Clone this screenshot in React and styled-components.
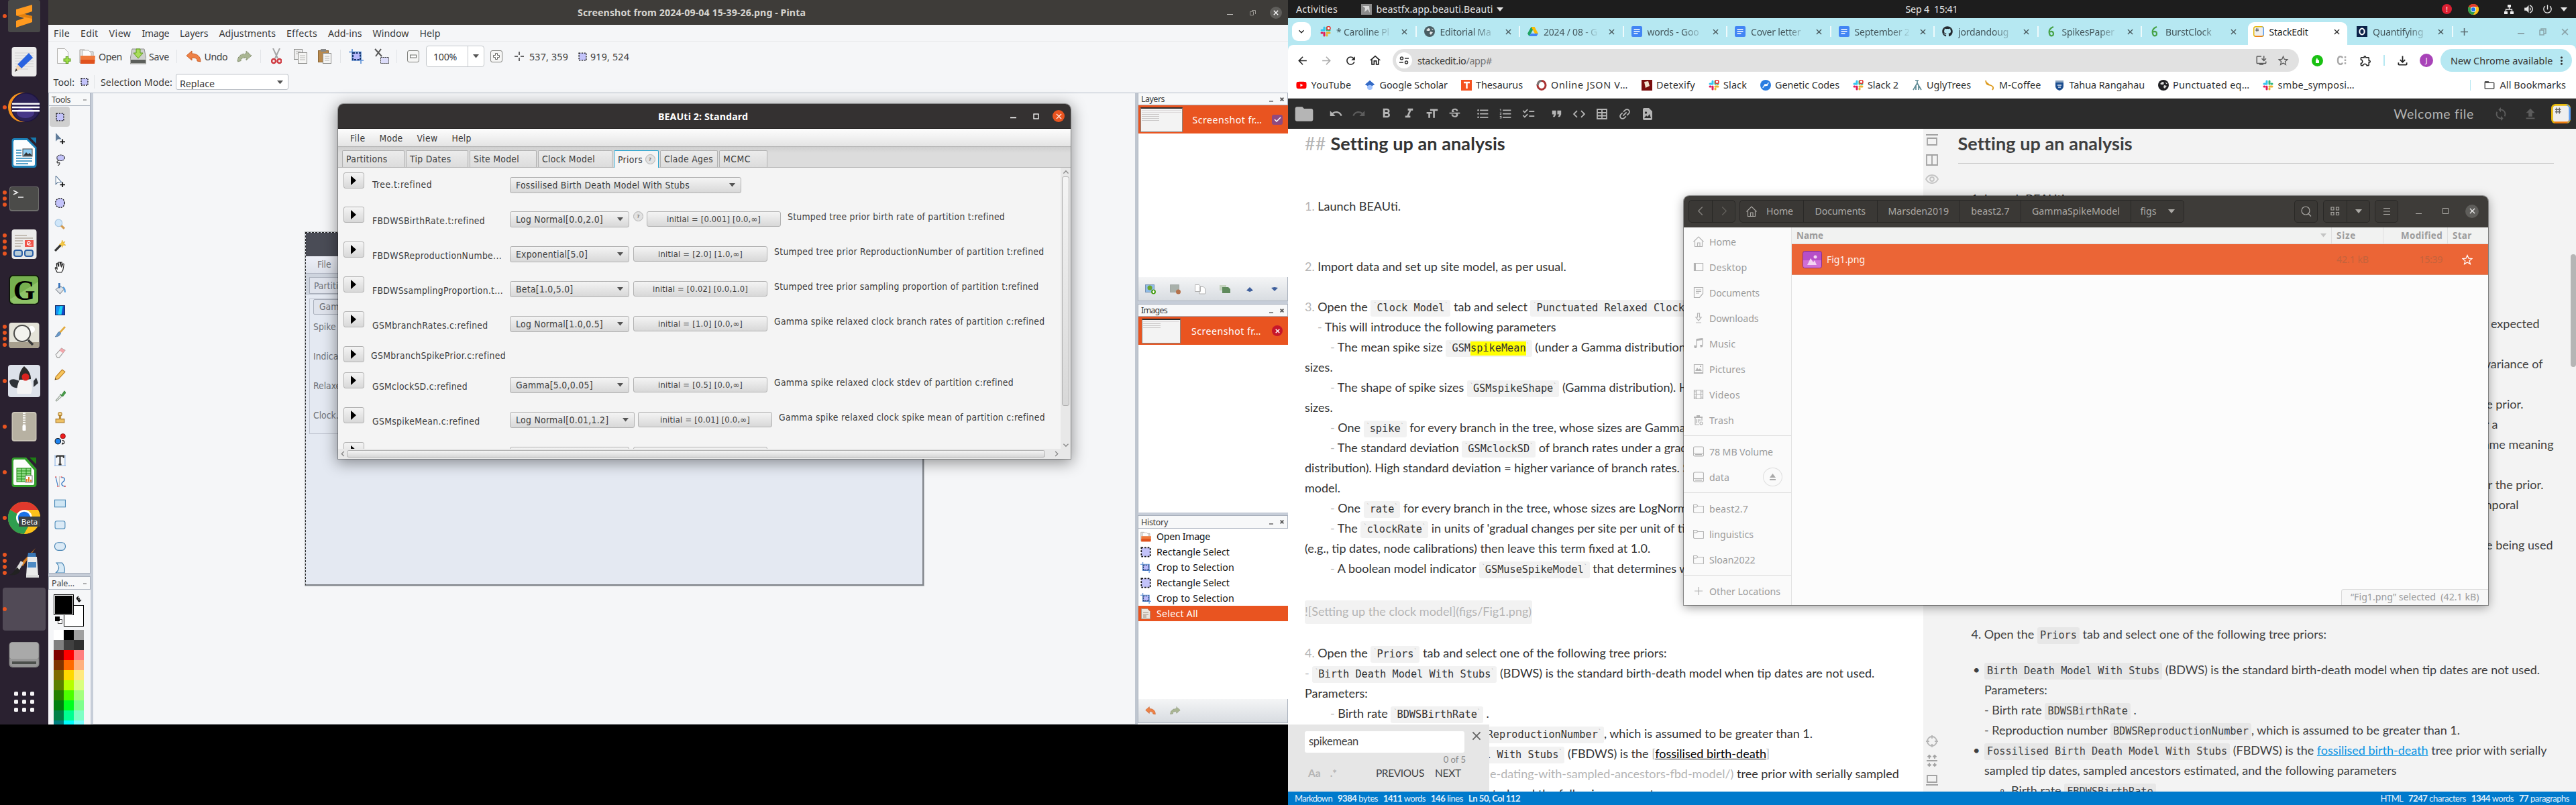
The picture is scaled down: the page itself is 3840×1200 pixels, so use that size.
import React, { useLayoutEffect, useRef } from "react";
import styled, { createGlobalStyle, css } from "styled-components";
import {
  MdUndo, MdRedo, MdFormatBold, MdFormatItalic, MdFormatSize, MdStrikethroughS,
  MdFormatListBulleted, MdFormatListNumbered, MdChecklist, MdFormatQuote, MdCode,
  MdLink, MdFolder, MdSync, MdFileUpload, MdArrowBack, MdArrowForward,
  MdRefresh, MdOutlineHome, MdStarBorder, MdOutlineExtension, MdFolderOpen,
  MdOutlineFileDownload, MdExpandMore, MdOutlineInstallDesktop,
  MdVolumeUp, MdPowerSettingsNew, MdMoreVert,
} from "react-icons/md";
import { FaGithub, FaYoutube } from "react-icons/fa";

const ui = `"Noto Sans", "Open Sans", sans-serif`;
const fx = `"DejaVu Sans Condensed", "DejaVu Sans", sans-serif`;
const prose = `Lato, "Open Sans", sans-serif`;
const mono = `"DejaVu Sans Mono", "Liberation Mono", monospace`;

const Global = createGlobalStyle`
  * { box-sizing: border-box; }
  body { margin: 0; background: #000; font-family: ${ui}; }
  svg { display: block; flex: none; }
`;

/* ---------- shared pieces ---------- */

const FitSpan = styled.span`
  display: inline-block;
  flex: none;
  white-space: pre;
`;

/* A one-line label that is tracked in or out until it fills the given width. */
function Fit({ w, children, className }) {
  const ref = useRef(null);
  useLayoutEffect(() => {
    const el = ref.current;
    el.style.letterSpacing = "0px";
    const natural = el.getBoundingClientRect().width;
    el.style.letterSpacing = `${(w - natural) / el.textContent.length}px`;
  }, [w, children]);
  return <FitSpan ref={ref} className={className}>{children}</FitSpan>;
}

const Desktop = styled.div`
  display: flex;
  width: 3840px;
  height: 1200px;
  background: #000;
  overflow: hidden;
`;
const LeftScreen = styled.div`
  position: relative;
  display: flex;
  width: 1920px;
  height: 1080px;
  flex: none;
  overflow: hidden;
`;
const RightScreen = styled.div`
  position: relative;
  display: flex;
  flex-direction: column;
  width: 1920px;
  height: 1200px;
  flex: none;
  overflow: hidden;
  background: #fff;
`;

/* ---------- dock ---------- */

const Dock = styled.nav`
  width: 72px;
  height: 1080px;
  flex: none;
  background: #2a2130;
  display: flex;
  flex-direction: column;
  overflow: hidden;
`;
const DockItem = styled.div`
  flex: none;
  height: 68px;
  display: flex;
  align-items: center;
  margin-top: ${(p) => (p.$first ? "-10px" : p.$last ? "2px" : 0)};
`;
const DockDots = styled.div`
  width: 12px;
  display: flex;
  flex-direction: column;
  gap: 3px;
  padding-left: 4px;
`;
const DockDot = styled.i`
  width: 6px;
  height: 6px;
  border-radius: 50%;
  background: #e95420;
`;
const DockBlank = styled.div`
  width: 64px;
  height: 64px;
  margin-left: -8px;
  border-radius: 4px;
  background: #514a56;
  display: flex;
  align-items: center;
`;
const AppGrid = styled.div`
  display: grid;
  grid-template-columns: repeat(3, 6px);
  gap: 6px;
  margin-left: 9px;
  i { width: 6px; height: 6px; border-radius: 1.5px; background: #f5f3f5; }
`;

const D = ({ children }) => <svg width="48" height="48" viewBox="0 0 48 48">{children}</svg>;

const ChromeLogo = ({ s = 48 }) => (
  <svg width={s} height={s} viewBox="0 0 48 48">
    <circle cx="24" cy="24" r="24" fill="#fbbc05" />
    <path d="M24 24 L3.2 12 A24 24 0 0 1 44.8 12 Z" fill="#e0392d" />
    <path d="M24 24 L3.2 12 A24 24 0 0 0 24 48 L34 30 Z" fill="#2f9e4f" />
    <path d="M24 12 H44.8 A24 24 0 0 1 24 48 L34.4 30Z" fill="#fcc21b" />
    <circle cx="24" cy="24" r="12" fill="#fff" />
    <circle cx="24" cy="24" r="9.3" fill="#1a73e8" />
  </svg>
);

const dockIcons = [
  { dots: 1, icon: <D><rect width="48" height="48" rx="3" fill="#474747" /><path d="M12 14L36 7v10l-12 4 12 3v9l-24 8V31l12-4-12-4z" fill="#ff9a1f" /><path d="M12 23l12-2 12 3v4z" fill="#e27f0d" /></D> },
  { dots: 0, icon: <D><rect x="5.5" y="2" width="37" height="44" rx="4" fill="#ecebeb" /><path d="M10 11h28M10 15h28M10 19h28M10 23h28M10 27h28M10 31h28M10 35h20" stroke="#cfcfcf" strokeWidth="1" /><path d="M14 28L31 11l6 7-17 16z" fill="#2a63e0" /><path d="M14 28l6 6-10 5z" fill="#f3d3b0" /><path d="M12 34l2 3-4 2z" fill="#333" /></D> },
  { dots: 1, icon: <D><circle cx="22" cy="24" r="22" fill="#f7941e" /><circle cx="26.5" cy="24" r="22" fill="#1d1440" /><circle cx="26.5" cy="24" r="20.5" fill="#2c2255" /><ellipse cx="26" cy="32" rx="13" ry="8" fill="#473788" /><path d="M6 18.7h41M6 24h41M6 29.3h41" stroke="#fff" strokeWidth="2.6" /></D> },
  { dots: 0, icon: <D><path d="M9 2h20l13.500 13.500V42a4 4 0 0 1-4 4H9.500a4 4 0 0 1-4-4V6a4 4 0 0 1 4-4z" fill="#1d81b8" /><path d="M33 1h9v9z" fill="#1579ae" /><path d="M9 5h19l12 12v24a2 2 0 0 1-2 2H10a2 2 0 0 1-2-2V7z" fill="#fcfdfe" /><path d="M12 20h8M12 24h8M12 28h8M12 32h24M12 36h24M12 40h18" stroke="#1d81b8" strokeWidth="1.600" /><rect x="22" y="18" width="14" height="11" fill="#8dcbf0" stroke="#444" /><path d="M23 28l4-5 3 3 2-2 4 4z" fill="#333" /></D> },
  { dots: 3, icon: <D><rect x="2" y="6" width="44" height="37" rx="4" fill="#6e6e6c" /><rect x="3" y="7" width="42" height="34" rx="3" fill="#4b4b49" /><path d="M8 12l6 3-6 3M15 22h8" stroke="#eee" strokeWidth="1.700" fill="none" /></D> },
  { dots: 4, icon: <D><rect x="5.500" y="2" width="37" height="44" rx="4" fill="#ecebea" /><path d="M10 11h18M10 15h27M10 19h12M10 23h12M10 27h9" stroke="#b5ada1" strokeWidth="1.500" /><rect x="25" y="18" width="13" height="10" fill="#f0544a" /><path d="M28 24c6 0 6-4 3-4s-3 7 4 5" stroke="#fff" fill="none" strokeWidth="1.300" /><rect x="9" y="33" width="12" height="9" rx="3" fill="#b9ccd8" stroke="#2c5fa5" strokeWidth="2" /><rect x="25" y="33" width="12" height="9" rx="3" fill="#b9ccd8" stroke="#2c5fa5" strokeWidth="2" /></D> },
  { dots: 0, icon: <D><rect x="1.500" y="2" width="45" height="44" rx="6" fill="#0b1506" /><rect x="3" y="3.500" width="42" height="41" rx="5" fill="#76b04f" /><path d="M3 38L45 12v28a5 5 0 0 1-5 5H8z" fill="#a5d57f" opacity=".5" /><text x="24" y="39" textAnchor="middle" fontFamily="Liberation Serif" fontWeight="bold" fontSize="42" fill="#000">G</text></D> },
  { dots: 4, icon: <D><rect x="1.500" y="5" width="45" height="38" rx="4" fill="#e4e3d8" /><path d="M1.500 34h45v5a4 4 0 0 1-4 4h-37a4 4 0 0 1-4-4z" fill="#a79f8d" /><circle cx="35" cy="15" r="5" fill="#fff" /><circle cx="21" cy="21" r="12" fill="#f3f3ee" stroke="#4a4a48" strokeWidth="2" /><path d="M30 31l7 7" stroke="#3a3a3a" strokeWidth="3.500" /></D> },
  { dots: 1, icon: <D><rect width="48" height="48" rx="4" fill="#dde2ea" /><path d="M24 2c-6 5-8 14-8 22l18-3c0-8-4-14-10-19z" fill="#2b2b2b" /><path d="M2 24c4-5 10-2 15 0l-2 10c-6 1-12-2-13-10zM38 24l4-5 3 8-7 6z" fill="#2f3338" /><path d="M17 22c-3 8-5 16-3 21h20c3-6 2-14-1-21z" fill="#f4f4f4" /><circle cx="26" cy="18" r="5.500" fill="#d8231f" /></D> },
  { dots: 1, icon: <D><rect x="5.500" y="2" width="37" height="44" rx="4" fill="#c9c4b6" /><rect x="7" y="4" width="34" height="40" rx="3" fill="#b7b1a2" /><path d="M24 3v20" stroke="#f6f6f2" strokeWidth="4" strokeDasharray="2 1.500" /><rect x="21.500" y="22" width="5" height="8" rx="1" fill="#fff" /></D> },
  { dots: 1, icon: <D><path d="M9 2h18l15.500 17V42a4 4 0 0 1-4 4H9.500a4 4 0 0 1-4-4V6a4 4 0 0 1 4-4z" fill="#33a02c" /><path d="M32 2h10v10z" fill="#1d7d14" /><path d="M9 5h16l14 16v20a2 2 0 0 1-2 2H10a2 2 0 0 1-2-2V7z" fill="#fbfdfb" /><rect x="13" y="18" width="21" height="20" fill="#8fdc86" stroke="#1d8a12" /><path d="M13 22h21M13 26h21M13 30h21M13 34h21M20 18v20M27 18v20" stroke="#1d8a12" /><rect x="26" y="29" width="10" height="10" fill="#fff" stroke="#777" /><path d="M28 38v-4M31 38v-7M34 38v-3" stroke="#e67e22" strokeWidth="2" /></D> },
  { dots: 1, icon: <D><ChromeLogo /><rect x="16" y="22" width="32" height="15" fill="#3c4043" /><text x="32" y="34" textAnchor="middle" fontFamily="Noto Sans" fontSize="11.500" fill="#fff">Beta</text></D> },
  { dots: 4, icon: <D><path d="M41 1L22 28l-4-3z" fill="#d67a1e" /><path d="M23 23l-7 12-5-2 8-13z" fill="#d9d9d9" /><path d="M14 30c-4 2-5 8-12 11 6 1 13 0 16-6z" fill="#222" /><path d="M30 8h11l1 6H29z" fill="#3a77b5" /><path d="M29 14h14l2 28H27z" fill="#eaeaea" /><path d="M30 22h12v8H29z" fill="#4d8ac4" /><path d="M27 41h19v4H27z" fill="#dcdcdc" /></D> },
];

const Drive = () => (
  <D><rect x="1.500" y="5" width="45" height="38" rx="5" fill="#7d7d7d" /><rect x="2.500" y="5.500" width="43" height="25" rx="4" fill="#a9a9a9" /><path d="M2.500 30h43v7a5 5 0 0 1-5 5h-33a5 5 0 0 1-5-5z" fill="#969696" /><rect x="6" y="34" width="36" height="4" fill="#4b4f4b" /></D>
);

function DockBar() {
  return (
    <Dock>
      {dockIcons.map((d, i) => (
        <DockItem key={i} $first={i === 0}>
          <DockDots>{Array.from({ length: d.dots }, (_, k) => <DockDot key={k} />)}</DockDots>
          {d.icon}
        </DockItem>
      ))}
      <DockItem><DockDots /><DockBlank><DockDot /></DockBlank></DockItem>
      <DockItem><DockDots /><Drive /></DockItem>
      <DockItem $last><DockDots /><AppGrid>{Array.from({ length: 9 }, (_, k) => <i key={k} />)}</AppGrid></DockItem>
    </Dock>
  );
}

/* ---------- Pinta ---------- */

const PintaWin = styled.div`
  width: 1848px;
  height: 1080px;
  display: flex;
  flex-direction: column;
  background: #f5f6f8;
  color: #3b3b3b;
  font: 14.200px ${ui};
`;
const PintaTitle = styled.div`
  height: 37px;
  flex: none;
  background: #3e3c39;
  color: #d6d4cf;
  font-weight: 700;
  display: flex;
  align-items: center;
  padding-left: 789px;
`;
const TitleButtons = styled.div`
  display: flex;
  align-items: center;
  margin-left: auto;
  padding-right: 9px;
  gap: 25px;
  & > :last-child { margin-left: -4.500px; }
`;
const MenuBar = styled.div`
  height: 25px;
  flex: none;
  display: flex;
  align-items: center;
  gap: 16px;
  padding-left: 8px;
  border-bottom: 1px solid #e9eaec;
`;
const ToolBar = styled.div`
  height: ${(p) => p.$h}px;
  flex: none;
  display: flex;
  align-items: center;
`;
const Item = styled.div`
  flex: none;
  display: flex;
  align-items: center;
  margin-left: ${(p) => p.$l || 0}px;
`;
const Spacer = styled.i`
  flex: 1;
`;
const Sep = styled.i`
  flex: none;
  width: 1px;
  height: 20px;
  background: #e2e4e7;
  margin-left: ${(p) => p.$l}px;
`;
const ZoomEntry = styled.div`
  flex: none;
  display: flex;
  align-items: center;
  margin-left: 10px;
  height: 32px;
  border: 1px solid #c4c8cc;
  border-radius: 4px;
  background: #fff;
  padding-left: 10px;
`;
const ZoomArrow = styled.div`
  display: flex;
  align-items: center;
  justify-content: center;
  width: 24px;
  height: 30px;
  margin-left: 16px;
  border-left: 1px solid #c4c8cc;
`;
const ModeSelect = styled.div`
  display: flex;
  justify-content: space-between;
  width: 168px;
  height: 24px;
  margin-left: 5px;
  padding: 4px 7px 0 5px;
  border: 1px solid #b9bec4;
  border-radius: 3px;
  background: #fff;
  overflow: hidden;
  line-height: 20px;
  svg { margin-top: 5px; }
`;
const Down = ({ c = "#555", w = 9 }) => (
  <svg width={w} height={w * 0.6} viewBox="0 0 10 6"><path d="M0 0h10L5 6z" fill={c} /></svg>
);

const Main = styled.div`
  flex: 1;
  min-height: 0;
  display: flex;
  border-top: 1px solid #b5bdc9;
`;
const ToolColumn = styled.div`
  width: 67px;
  flex: none;
  display: flex;
  flex-direction: column;
  border-right: 4px solid #c6cdd8;
`;
const PanelHead = styled.div`
  height: ${(p) => p.$h || 19}px;
  flex: none;
  display: flex;
  align-items: center;
  justify-content: space-between;
  padding: 0 4px;
  font-size: 12.500px;
  border: 1px solid #a9b1bd;
  border-top-width: ${(p) => (p.$top ? "1px" : 0)};
  background: #f7f8f9;
`;
const ToolList = styled.div`
  height: 697px;
  flex: none;
  overflow: hidden;
  border: 1px solid #a9b1bd;
  border-top: 0;
  padding: 1px 0 0 1px;
`;
const ToolCell = styled.div`
  width: 30px;
  height: 30px;
  margin-bottom: 2px;
  border-radius: 4px;
  display: flex;
  align-items: center;
  justify-content: center;
  background: ${(p) => (p.$on ? "#cfcfcf" : "none")};
`;
const Palette = styled.div`
  flex: 1;
  min-height: 0;
  overflow: hidden;
  padding: 7px 0 0 8px;
`;
const Swatches = styled.div`
  display: grid;
  grid-template-columns: repeat(3, 15px);
  grid-auto-rows: 15px;
  margin-top: 5px;
`;
const Swatch = styled.i`
  background: ${(p) => p.$c};
`;
const CanvasArea = styled.div`
  position: relative;
  flex: 1;
  border-bottom: 1px solid #c3c8ce;
`;
const CanvasImage = styled.div`
  position: absolute;
  left: 316px;
  top: 207px;
  width: 922px;
  height: 527px;
  background: #e4e9f2;
  border: 1px dashed #222;
  border-right: 2px solid #82868c;
  border-bottom: 2px solid #82868c;
  outline: 1px solid #b9bcc0;
  color: #6d7177;
  font: 13.800px ${fx};
  font-stretch: condensed;
`;
const ImgTitle = styled.div`
  height: 35px;
  background: #4a4c56;
`;
const ImgMenu = styled.div`
  height: 26px;
  padding: 4px 17px;
  background: linear-gradient(#eef0f8, #dde1ea);
  border-bottom: 1px solid #b0b5c2;
`;
const ImgTabs = styled.div`
  height: 32px;
  padding: 5px 0 0 5px;
  background: #ced4de;
`;
const ImgTab = styled.div`
  height: 25px;
  width: 90px;
  padding: 4px 6px;
  border: 1px solid #a9afbb;
  background: #dfe3ec;
`;
const ImgPane = styled.div`
  height: 202px;
  margin: 5px 0 0 5px;
  border: 1px solid #c0c5d0;
  padding-left: 5px;
`;
const ImgButton = styled.div`
  height: 23px;
  width: 90px;
  padding: 2px 8px;
  border: 1px solid #a9afbb;
  border-radius: 2px;
  background: #dfe3ec;
`;
const ImgLabel = styled.div`
  height: 44px;
  padding-top: 10px;
`;

const SideColumn = styled.div`
  width: 228px;
  flex: none;
  display: flex;
  flex-direction: column;
  border-left: 4px solid #bfc6d0;
`;
const HeadButtons = styled.div`
  display: flex;
  align-items: center;
  gap: 10px;
  padding-right: 1px;
`;
const Pane = styled.div`
  height: ${(p) => p.$h}px;
  flex: none;
  background: #fff;
  border-left: 1px solid #a9b1bd;
  overflow: hidden;
`;
const PaneTools = styled.div`
  height: 36px;
  flex: none;
  display: flex;
  align-items: center;
  padding-left: 10px;
  gap: 21px;
  background: linear-gradient(#f4f5f6, #d8dce1);
  border: 1px solid #a9b1bd;
  border-top: 0;
`;
const Gutter = styled.div`
  height: 4px;
  flex: none;
  background: #c6cdd8;
`;
const ImageRow = styled.div`
  height: 42px;
  display: flex;
  align-items: center;
  justify-content: space-between;
  padding: 0 8px 0 ${(p) => (p.$narrow ? 5 : 3)}px;
  background: #e95420;
  color: #fff;
`;
const Thumb = styled.div`
  width: ${(p) => p.$w}px;
  height: 37px;
  border: 1px solid #8a8580;
  border-top: 2px solid #2d2b2b;
  background: #f3f3f3;
  padding: 2px 1px;
  display: flex;
  flex-direction: column;
  gap: 2px;
  i { height: 1px; background: #ddd9da; }
  b { height: 1px; width: 26px; background: #c9c6c6; }
`;
const Check = styled.div`
  width: 16px;
  height: 15px;
  border-radius: 3px;
  background: #8e4a80;
  display: flex;
  align-items: center;
  justify-content: center;
`;
const CloseDot = styled.div`
  width: ${(p) => p.$s}px;
  height: ${(p) => p.$s}px;
  flex: none;
  border-radius: 50%;
  background: ${(p) => p.$c};
  display: flex;
  align-items: center;
  justify-content: center;
`;
const Cross = ({ s = 8, c = "#fff", w = 1.6 }) => (
  <svg width={s} height={s} viewBox="0 0 10 10"><path d="M1 1l8 8M9 1l-8 8" stroke={c} strokeWidth={w} /></svg>
);
const HistoryRow = styled.div`
  height: 23px;
  display: flex;
  align-items: center;
  gap: 8px;
  padding-left: 3px;
  background: ${(p) => (p.$on ? "#e95420" : "none")};
  color: ${(p) => (p.$on ? "#fff" : "#111")};
`;

const S = ({ w = 20, h = w, v = "0 0 20 20", children }) => (
  <svg width={w} height={h} viewBox={v} fill="none">{children}</svg>
);
const UndoArrow = ({ w = 23 }) => (
  <S w={w} h={w * 0.78} v="0 0 23 18"><path d="M1 8l8-7v4c8 0 13 4 13 12l-5-1c0-4-3-5-8-5v4z" fill="#ee8146" stroke="#c95f28" /></S>
);
const RedoArrow = ({ w = 23 }) => (
  <S w={w} h={w * 0.78} v="0 0 23 18"><path d="M22 8l-8-7v4C6 5 1 9 1 17l5-1c0-4 3-5 8-5v4z" fill="#a9b592" stroke="#788265" strokeDasharray="1.500 1" /></S>
);
const SelIcon = ({ w = 12 }) => (
  <S w={w} v="0 0 12 12"><rect x="1" y="1" width="10" height="10" fill="#c3c3fa" stroke="#111" strokeWidth="1.300" strokeDasharray="2 1.500" /></S>
);
const CropIcon = ({ w = 22 }) => (
  <S w={w} v="0 0 22 22"><path d="M0 4.500h18V22M5 0v17h17" stroke="#5b8fd6" strokeWidth="1.600" /><rect x="6" y="6" width="11" height="10" fill="#b7b9fb" stroke="#14306a" strokeWidth="2" strokeDasharray="3 1.500" /></S>
);
const FolderOrange = ({ w = 24 }) => (
  <S w={w} v="0 0 24 24"><path d="M1 22V2h7l2 3h11v17z" fill="#e4e3e1" stroke="#a5a29e" /><path d="M5 3h9l4 4v5H5z" fill="#fdfdfd" stroke="#b9b7b4" /><path d="M2 11h22l-1 12H2z" fill="#f07a3c" /><path d="M2 17h21.500l-.5 6H2z" fill="#e0521e" /></S>
);
const CopyIcon = () => (
  <S w={20} h={22} v="0 0 20 22"><rect x=".5" y=".5" width="12" height="15" fill="#eee" stroke="#8d8d8b" /><rect x="6.500" y="5.500" width="13" height="16" fill="#f5f5f4" stroke="#8d8d8b" /><path d="M9 10h8M9 13h8M9 16h8M3 4h7M3 7h3" stroke="#b5b5b3" /></S>
);

const menus = [["File", 24], ["Edit", 26.5], ["View", 33], ["Image", 40.500], ["Layers", 42.500], ["Adjustments", 84.500], ["Effects", 46], ["Add-ins", 50.500], ["Window", 54], ["Help", 31]];

const T16 = ({ children }) => <svg width="17" height="17" viewBox="0 0 16 16" fill="none">{children}</svg>;
const plus = <path d="M8 12.500h7M11.500 9v7" stroke="#111" strokeWidth="1.600" />;
const tools = [
  <SelIcon w={13} />,
  <T16><path d="M2 0v12l3-3h5z" fill="#5e7a99" />{plus}</T16>,
  <T16><ellipse cx="9" cy="5" rx="5.500" ry="4" fill="#c3c3fa" stroke="#222" strokeDasharray="2 1" /><path d="M6 9c-3 0-3 4 0 3s1 3-1 4" stroke="#222" /></T16>,
  <T16><path d="M2 0v12l3-3h5z" fill="#fff" stroke="#5e7a99" />{plus}</T16>,
  <T16><circle cx="8" cy="8" r="6.500" fill="#c3c3fa" stroke="#111" strokeWidth="1.200" strokeDasharray="2 1.500" /></T16>,
  <T16><path d="M9 9l5 5" stroke="#d49a4e" strokeWidth="3" /><circle cx="6" cy="6" r="5" fill="#cfe6f9" stroke="#9fc0de" /></T16>,
  <T16><path d="M1 15l8-8" stroke="#333" strokeWidth="3" /><path d="M11 0l1 3 3-1-2 3 3 2-4 0-1 3-1-3-3-1 3-2z" fill="#f6c945" stroke="#dca512" strokeWidth=".6" /></T16>,
  <T16><path d="M4 15L1 9l1-1 2 2L3 3l1-1 2 5V1h2v6l1-6 1.500 0L10 8l2-5 1.500.500L12 12l-2 3z" fill="#fff" stroke="#111" /></T16>,
  <T16><path d="M2 9l6-5 6 4-6 7z" fill="#dfe3e8" stroke="#8b929b" /><path d="M7 0v7" stroke="#3471ba" strokeWidth="2.500" /><path d="M12 6c3 1 3 4 3 7" stroke="#4f9be0" strokeWidth="2" /></T16>,
  <T16><rect x="1.500" y="1.500" width="13" height="13" fill="#1593f5" stroke="#0d1f5c" /><path d="M8 2h6v12H5z" fill="#18d3f7" /><path d="M12 2h2v12h-4z" fill="#1545c8" /></T16>,
  <T16><path d="M15 1L7 10" stroke="#e2a93c" strokeWidth="2.500" /><path d="M7 8l2 2c-1 4-5 5-8 5 3-2 3-6 6-7z" fill="#6a9acb" stroke="#3e6690" strokeWidth=".6" /></T16>,
  <T16><path d="M2 10l8-9 5 3-8 10H4z" fill="#f4f4f4" stroke="#9a9a9a" /><path d="M7 4l3-3 5 3-3 4z" fill="#f2a6ab" /></T16>,
  <T16><path d="M1 15l1-4 9-10 4 3-9 10z" fill="#f7c55c" stroke="#bb7a1c" /><path d="M1 15l.5-2 1.500 1.500z" fill="#222" /></T16>,
  <T16><path d="M2 14l7-8 2 2-8 7z" fill="#eef2ee" stroke="#9aa59a" /><path d="M8 5l3 3M10 7l4-6 2 2-4 5z" fill="#4aa14c" stroke="#3c8a3e" /></T16>,
  <T16><circle cx="8" cy="3" r="2.500" fill="#f5d48c" stroke="#b1812d" /><path d="M7 5h2v5h5v5H2v-5h5z" fill="#eec266" stroke="#a87725" /></T16>,
  <T16><circle cx="12" cy="4" r="3.500" fill="#ee1c1c" stroke="#5a0000" strokeWidth=".6" /><circle cx="5" cy="11" r="4" fill="#1d83f0" stroke="#111" /><path d="M11 10c4 0 4 5 0 5l1-2" stroke="#111" /></T16>,
  <T16><path d="M1 0v16M15 0v16M0 15h16" stroke="#8fb5e6" /><path d="M3 1.500h10v3M8 1.500v12M6 13.500h4M3 4V1.500" stroke="#333" strokeWidth="2" /></T16>,
  <T16><path d="M2 1l3 13" stroke="#3177c4" /><path d="M7 0v15" stroke="#c4c4c4" /><path d="M10 2c6-1 5 4 2 6s-2 6 3 6" stroke="#3177c4" strokeWidth="1.200" /><path d="M9 1h2M1 1h2M14 14h2M4 14h2" stroke="#d11" /></T16>,
  <T16><rect x=".5" y="3" width="15" height="10" fill="#cfe6f4" stroke="#4889b8" /></T16>,
  <T16><rect x="1" y="2.500" width="14" height="11" rx="2.500" fill="#dbeaf6" stroke="#4889b8" /></T16>,
  <T16><rect x=".5" y="2.500" width="15" height="11" rx="5" fill="#dbeaf6" stroke="#3f7fb0" /></T16>,
  <T16><path d="M3 1h8c4 5 4 9 3 14H2c5-4 6-9 1-14z" fill="#d6e9f6" stroke="#3f7fb0" /></T16>,
];
const colors = "#fff #000 #a0a0a0 #808080 #404040 #303030 #7f0000 #f00 #ff7f7f #7f3300 #ff6a00 #ffb27f #7f6a00 #ffd800 #ffe97f #5b7f00 #b6ff00 #daff7f #267f00 #4cff00 #a5ff7f #007f0e #00ff21 #7fff8e #007f46 #00ff90 #7fffc5 #007f7f #0ff #7fffff".split(" ");

const SideHead = ({ title, w, top, h }) => (
  <PanelHead $top={top} $h={h}>
    <Fit w={w}>{title}</Fit>
    <HeadButtons>
      <svg width="6" height="8"><path d="M0 7h6" stroke="#666" strokeWidth="1.500" /></svg>
      <Cross s={6} c="#555" w={3} />
    </HeadButtons>
  </PanelHead>
);

function Pinta() {
  return (
    <PintaWin>
      <PintaTitle>
        <Fit w={340}>Screenshot from 2024-09-04 15-39-26.png - Pinta</Fit>
        <TitleButtons>
          <svg width="9" height="12"><path d="M0 8.500h9" stroke="#bdbbb7" /></svg>
          <svg width="10" height="10"><path d="M.5 3.500h5v5h-5zM3 1.500h5.500V7" stroke="#9b9995" fill="none" /></svg>
          <CloseDot $s={18} $c="#5f5e5b"><Cross /></CloseDot>
        </TitleButtons>
      </PintaTitle>
      <MenuBar>{menus.map(([m, w]) => <Fit key={m} w={w}>{m}</Fit>)}</MenuBar>
      <ToolBar $h={44}>
        <Item $l={13}><S w={21} h={24} v="0 0 21 24"><path d="M.5.500h11l5 5v17H.500z" fill="#fafafa" stroke="#b3b1ae" /><path d="M15 12v11M9.500 17.500h11" stroke="#5a9a16" strokeWidth="4.500" /><path d="M15 13v9M10.500 17.500h9" stroke="#9fe04a" strokeWidth="2.500" /></S></Item>
        <Item $l={12}><FolderOrange /></Item>
        <Item $l={5}><Fit w={35}>Open</Fit></Item>
        <Item $l={12}><S w={24} v="0 0 24 24"><path d="M3 1h18l3 15v7H0v-7z" fill="#cfd0ce" stroke="#8f908c" /><path d="M1 17h22v5H1z" fill="#5c5f5b" /><path d="M9 1h6v6h4l-7 8-7-8h4z" fill="#a9dd5a" stroke="#5c9a1c" /></S></Item>
        <Item $l={4}><Fit w={30}>Save</Fit></Item>
        <Sep $l={11} />
        <Item $l={13}><UndoArrow /></Item>
        <Item $l={4.5}><Fit w={34.5}>Undo</Fit></Item>
        <Item $l={14}><RedoArrow /></Item>
        <Sep $l={12} />
        <Item $l={15}><S w={16} h={24} v="0 0 16 24"><path d="M3 0l7 15M13 0L6 15" stroke="#a5a5a5" strokeWidth="2" /><circle cx="4" cy="19" r="3" stroke="#cf3b42" strokeWidth="2.500" /><circle cx="12.500" cy="19" r="3" stroke="#cf3b42" strokeWidth="2.500" /></S></Item>
        <Item $l={18}><CopyIcon /></Item>
        <Item $l={16}><S w={20} h={22} v="0 0 20 22"><rect x=".5" y="2.500" width="15" height="17" fill="#b98a4e" stroke="#8a6636" /><rect x="4" y="0" width="8" height="4" fill="#888" /><rect x="7.500" y="6.500" width="12" height="15" fill="#f5f5f4" stroke="#8d8d8b" /><path d="M10 11h7M10 14h7M10 17h7" stroke="#b5b5b3" /></S></Item>
        <Sep $l={13} />
        <Item $l={12}><CropIcon /></Item>
        <Item $l={16}><S w={22} h={24} v="0 0 22 24"><path d="M1 1l10 11M10 1L2 12" stroke="#555" strokeWidth="2" /><rect x="9.500" y="13.500" width="12" height="9" fill="#dcdcfa" stroke="#333" strokeDasharray="2 1" /></S></Item>
        <Sep $l={11} />
        <Item $l={15}><S w={18} v="0 0 18 18"><rect x=".5" y=".5" width="17" height="17" rx="2.500" fill="#f6f6f5" stroke="#7f807c" /><rect x="4.500" y="7" width="9" height="4" fill="#fff" stroke="#6d6e6a" /></S></Item>
        <ZoomEntry><Fit w={35}>100%</Fit><ZoomArrow><Down /></ZoomArrow></ZoomEntry>
        <Item $l={9}><S w={18} v="0 0 18 18"><rect x=".5" y=".5" width="17" height="17" rx="2.500" fill="#f6f6f5" stroke="#7f807c" /><path d="M7.500 4.500h3v3h3v3h-3v3h-3v-3h-3v-3h3z" fill="#fff" stroke="#6d6e6a" /></S></Item>
        <Item $l={18}><S w={14} v="0 0 14 14"><path d="M7 0v14M0 7h14" stroke="#333" strokeWidth="1.500" strokeDasharray="5 4" /></S></Item>
        <Item $l={8}><Fit w={58}>537, 359</Fit></Item>
        <Item $l={15}><SelIcon w={13} /></Item>
        <Item $l={5}><Fit w={58}>919, 524</Fit></Item>
      </ToolBar>
      <ToolBar $h={32}>
        <Item $l={7.5}><Fit w={31.5}>Tool:</Fit></Item>
        <Item $l={9}><SelIcon /></Item>
        <Sep $l={8} />
        <Item $l={9}><Fit w={107}>Selection Mode:</Fit></Item>
        <ModeSelect><Fit w={52}>Replace</Fit><Down /></ModeSelect>
      </ToolBar>
      <Main>
        <ToolColumn>
          <PanelHead><Fit w={28}>Tools</Fit><svg width="6" height="8"><path d="M0 5h5" stroke="#666" /></svg></PanelHead>
          <ToolList>{tools.map((t, i) => <ToolCell key={i} $on={i === 0}>{t}</ToolCell>)}</ToolList>
          <Gutter />
          <PanelHead $top $h={20}><Fit w={34}>Pale…</Fit><svg width="6" height="8"><path d="M0 5h5" stroke="#666" /></svg></PanelHead>
          <Palette>
            <S w={45} h={48} v="0 0 45 48">
              <rect x="15.500" y="16.500" width="29" height="31" fill="#fff" stroke="#000" />
              <rect x=".5" y=".5" width="29" height="30" fill="#000" stroke="#000" /><rect x="1.500" y="1.500" width="27" height="28" stroke="#fff" />
              <path d="M34 6h4v5M34 6l3-3M34 6l3 3M38 11l-2-2M38 11l3-3" stroke="#111" strokeWidth="1.500" />
              <rect x="6.500" y="37.500" width="6" height="6" fill="#fff" stroke="#555" /><rect x="2" y="33" width="7" height="7" fill="#000" />
            </S>
            <Swatches>{colors.map((c) => <Swatch key={c} $c={c} />)}</Swatches>
          </Palette>
        </ToolColumn>
        <CanvasArea>
          <CanvasImage>
            <ImgTitle />
            <ImgMenu>File</ImgMenu>
            <ImgTabs><ImgTab>Partitions</ImgTab></ImgTabs>
            <ImgPane>
              <ImgButton>Gamma</ImgButton>
              <ImgLabel>Spike</ImgLabel>
              <ImgLabel>Indicator</ImgLabel>
              <ImgLabel>Relaxed</ImgLabel>
              <ImgLabel>Clock.rate</ImgLabel>
            </ImgPane>
          </CanvasImage>
        </CanvasArea>
        <SideColumn>
          <SideHead title="Layers" w={35} h={18} />
          <Pane $h={256}>
            <ImageRow>
              <Thumb $w={63}><i /><i /><b /><b /><b /><b /></Thumb>
              <Fit w={104}>Screenshot fr…</Fit>
              <Check><svg width="11" height="8"><path d="M1 4l3 3 6-6" stroke="#fff" strokeWidth="1.500" fill="none" /></svg></Check>
            </ImageRow>
          </Pane>
          <PaneTools>
            <S w={16} v="0 0 16 16"><rect x=".5" y="1.500" width="13" height="11" fill="#8fbbe8" stroke="#7893b2" /><circle cx="7" cy="6" r="3.500" fill="#6ba52e" /><circle cx="12.500" cy="12" r="3.500" fill="#4ea11f" /><path d="M12.500 10v4M10.500 12h4" stroke="#fff" /></S>
            <S w={16} v="0 0 16 16"><rect x=".5" y="1.500" width="13" height="11" fill="#a9b1ab" stroke="#7d837e" strokeDasharray="1 1" /><circle cx="12.500" cy="12" r="3.500" fill="#b5724c" /></S>
            <S w={16} v="0 0 16 16"><path d="M.5 1.500h6l2 2v8h-8zM7 4.500h6l2.500 2.500v8H7z" fill="#fff" stroke="#b0b0b0" /></S>
            <S w={16} v="0 0 16 16"><rect x="0" y="2" width="10" height="8" fill="#c5d3bf" /><path d="M4 5h9l3 3v6H4z" fill="#5f8a5c" /></S>
            <S w={16} v="0 0 16 16"><path d="M3 10l5-5 5 5-5 2z" fill="#3f5f9c" /></S>
            <S w={16} v="0 0 16 16"><path d="M3 6l5 5 5-5-5-1z" fill="#3f5f9c" /></S>
          </PaneTools>
          <Gutter />
          <SideHead title="Images" w={39} top />
          <Pane $h={292}>
            <ImageRow $narrow>
              <Thumb $w={58}><i /><b /><b /><b /></Thumb>
              <Fit w={104}>Screenshot fr…</Fit>
              <CloseDot $s={16} $c="#c7162b"><Cross s={7} w={2} /></CloseDot>
            </ImageRow>
          </Pane>
          <Gutter />
          <SideHead title="History" w={40} top h={20} />
          <Pane $h={254}>
            {[["Open Image", 80, 0], ["Rectangle Select", 109, 1], ["Crop to Selection", 116, 2], ["Rectangle Select", 109, 1], ["Crop to Selection", 116, 2]].map(([t, w, k], i) => (
              <HistoryRow key={i}>
                <Item>{k === 0 ? <FolderOrange w={16} /> : k === 1 ? <SelIcon w={16} /> : <CropIcon w={16} />}</Item>
                <Fit w={w}>{t}</Fit>
              </HistoryRow>
            ))}
            <HistoryRow $on>
              <S w={16} v="0 0 16 16"><path d="M1.500.500h9l4 4v11h-13z" fill="#ece6df" stroke="#a8998c" /><path d="M4 6h8M4 8.500h8M4 11h5M4 13h5" stroke="#9d8d80" /></S>
              <Fit w={62}>Select All</Fit>
            </HistoryRow>
          </Pane>
          <PaneTools><UndoArrow w={16} /><RedoArrow w={16} /></PaneTools>
        </SideColumn>
      </Main>
    </PintaWin>
  );
}

/* ---------- BEAUti ---------- */

const raised = css`
  background: linear-gradient(#f4f4f4, #d8d8d8);
  border: 1px solid #b1b1b1;
  border-radius: 3px;
`;
const Beauti = styled.section`
  position: absolute;
  left: 504px;
  top: 155px;
  width: 1092px;
  height: 529px;
  display: flex;
  flex-direction: column;
  border-radius: 8px 8px 0 0;
  background: #f4f4f4;
  box-shadow: 0 4px 22px 2px rgba(0, 0, 0, 0.42), 0 0 0 1px rgba(0, 0, 0, 0.32);
  color: #3c3c3c;
  font: 13.800px/20px ${fx};
  font-stretch: condensed;
`;
const BTitle = styled.div`
  height: 37px;
  flex: none;
  display: flex;
  align-items: center;
  padding-left: 477px;
  border-radius: 8px 8px 0 0;
  border-bottom: 1px solid #1f1d1d;
  background: #343131;
  color: #fff;
  font: 700 14.200px ${ui};
`;
const BMenu = styled.div`
  height: 27px;
  flex: none;
  display: flex;
  align-items: center;
  gap: 21px;
  padding: 2px 0 0 18px;
  background: linear-gradient(#fdfdfd, #e4e4e4);
  border-bottom: 1px solid #b5b5b5;
`;
const BTabs = styled.div`
  height: 31px;
  flex: none;
  display: flex;
  align-items: flex-end;
  gap: 2px;
  padding-left: 5.500px;
  background: linear-gradient(#cfcfcf, #dcdcdc 30%);
  border-bottom: 1px solid #b5b5b5;
`;
const BTab = styled.div`
  width: ${(p) => p.$w}px;
  height: 25px;
  display: flex;
  align-items: center;
  justify-content: space-between;
  padding: 0 4px 0 5.500px;
  border: 1px solid #b1b1b1;
  border-bottom: 0;
  border-radius: 2px 2px 0 0;
  background: linear-gradient(#ececec, #dcdcdc);
  ${(p) => p.$on && css`
    height: 26px;
    margin-bottom: -1px;
    background: #f4f4f4;
    border: 1.500px solid #2aa3cf;
    border-bottom: 0;
  `}
`;
const Help = styled.i`
  flex: none;
  width: 15px;
  height: 15px;
  border-radius: 50%;
  border: 1px solid #b1b1b1;
  background: #e2e2e2;
  font: 700 7px/13px ${ui};
  text-align: center;
  color: #666;
  margin: ${(p) => p.$m || 0};
`;
const BBody = styled.div`
  flex: 1;
  min-height: 0;
  display: flex;
`;
const BList = styled.div`
  flex: 1;
  overflow: hidden;
  padding: 7px 0 0 7.500px;
`;
const BRow = styled.div`
  height: ${(p) => p.$h}px;
  display: flex;
  align-items: flex-start;
`;
const Expand = styled.div`
  ${raised}
  width: 31px;
  height: 24px;
  flex: none;
  display: flex;
  align-items: center;
  justify-content: center;
`;
const BName = styled.div`
  width: ${(p) => 217.5 - p.$l}px;
  flex: none;
  margin: ${(p) => p.$t}px 0 0 ${(p) => p.$l}px;
`;
const Combo = styled.div`
  ${raised}
  width: ${(p) => p.$w}px;
  height: 24px;
  flex: none;
  margin-top: 7px;
  padding: 0 8px;
  display: flex;
  align-items: center;
  justify-content: space-between;
`;
const Init = styled.div`
  ${raised}
  width: 200px;
  height: 23px;
  flex: none;
  margin: 7px 0 0 ${(p) => p.$l}px;
  display: flex;
  align-items: center;
  justify-content: center;
  font-size: 12.800px;
`;
const Desc = styled.div`
  margin: 5px 0 0 10px;
`;
const VBar = styled.div`
  width: 15px;
  flex: none;
  display: flex;
  flex-direction: column;
  align-items: center;
  justify-content: flex-start;
  padding: 3px 0 1px;
  background: #e8e8e8;
  & > :last-child { margin-top: auto; }
`;
const HBar = styled.div`
  height: 15px;
  flex: none;
  display: flex;
  align-items: center;
  padding: 0 17px 0 3px;
  background: #e8e8e8;
`;
const VThumb = styled.div`
  ${raised}
  width: 11px;
  height: 342px;
  margin-top: 1px;
`;
const HThumb = styled.div`
  ${raised}
  width: 1041px;
  height: 11px;
  margin-left: 1px;
`;
const chevrons = { up: "M1 6l4-4 4 4", down: "M1 3l4 4 4-4", left: "M6 1L2 5l4 4", right: "M3 1l4 4-4 4" };
const Chev = ({ d, c = "#888", s = 9, w = 1.5 }) => (
  <svg width={s} height={s} viewBox="0 0 9 10"><path d={chevrons[d]} stroke={c} strokeWidth={w} fill="none" /></svg>
);
const Triangle = () => <svg width="8" height="14"><path d="M0 0l8 7-8 7z" fill="#000" /></svg>;

const priors = [
  { n: "Tree.t:refined", nw: 89, t: 8, h: 51, d: "Fossilised Birth Death Model With Stubs", dw: 259, cw: 344.5 },
  { n: "FBDWSBirthRate.t:refined", nw: 168, t: 11, h: 52, d: "Log Normal[0.0,2.0]", dw: 130, help: 1, i: "initial = [0.001] [0.0,∞]", iw: 140, s: "Stumped tree prior birth rate of partition t:refined", sw: 324 },
  { n: "FBDWSReproductionNumbe...", nw: 193, t: 11, h: 52, d: "Exponential[5.0]", dw: 107, i: "initial = [2.0] [1.0,∞]", iw: 126, s: "Stumped tree prior ReproductionNumber of partition t:refined", sw: 402.5 },
  { n: "FBDWSsamplingProportion.t...", nw: 195, t: 11, h: 52, d: "Beta[1.0,5.0]", dw: 85.500, i: "initial = [0.02] [0.0,1.0]", iw: 142, s: "Stumped tree prior sampling proportion of partition t:refined", sw: 394.5 },
  { n: "GSMbranchRates.c:refined", nw: 172.5, t: 11, h: 52, d: "Log Normal[1.0,0.5]", dw: 130, i: "initial = [1.0] [0.0,∞]", iw: 126, s: "Gamma spike relaxed clock branch rates of partition c:refined", sw: 403.5 },
  { n: "GSMbranchSpikePrior.c:refined", nw: 201, t: 4, h: 39, l: 10.5 },
  { n: "GSMclockSD.c:refined", nw: 142, t: 11, h: 52, d: "Gamma[5.0,0.05]", dw: 115, i: "initial = [0.5] [0.0,∞]", iw: 126, s: "Gamma spike relaxed clock stdev of partition c:refined", sw: 357 },
  { n: "GSMspikeMean.c:refined", nw: 160.5, t: 11, h: 52, d: "Log Normal[0.01,1.2]", dw: 138.5, cw: 186, il: 5, i: "initial = [0.01] [0.0,∞]", iw: 134, s: "Gamma spike relaxed clock spike mean of partition c:refined", sw: 397 },
];

function BeautiWindow() {
  return (
    <Beauti>
      <BTitle>
        <Fit w={134}>BEAUti 2: Standard</Fit>
        <TitleButtons>
          <svg width="9" height="12"><path d="M0 8.500h9" stroke="#fff" strokeWidth="1.500" /></svg>
          <svg width="9" height="9"><rect x="1" y="1" width="7" height="7" stroke="#fff" strokeWidth="1.300" fill="none" /></svg>
          <CloseDot $s={18} $c="#e95420"><Cross s={9} w={1.4} /></CloseDot>
        </TitleButtons>
      </BTitle>
      <BMenu><Fit w={22.5}>File</Fit><Fit w={35}>Mode</Fit><Fit w={31}>View</Fit><Fit w={29}>Help</Fit></BMenu>
      <BTabs>
        <BTab $w={93}><Fit w={61.5}>Partitions</Fit></BTab>
        <BTab $w={93}><Fit w={61.5}>Tip Dates</Fit></BTab>
        <BTab $w={100}><Fit w={68}>Site Model</Fit></BTab>
        <BTab $w={111}><Fit w={79}>Clock Model</Fit></BTab>
        <BTab $w={67} $on><Fit w={37}>Priors</Fit><Help>?</Help></BTab>
        <BTab $w={86}><Fit w={73}>Clade Ages</Fit></BTab>
        <BTab $w={72}><Fit w={41}>MCMC</Fit></BTab>
      </BTabs>
      <BBody>
        <BList>
          {priors.map((p) => (
            <BRow key={p.n} $h={p.h}>
              <Expand><Triangle /></Expand>
              <BName $t={p.t} $l={p.l || 12.5}><Fit w={p.nw}>{p.n}</Fit></BName>
              {p.d && <Combo $w={p.cw || 178}><Fit w={p.dw}>{p.d}</Fit><Down /></Combo>}
              {p.help && <Help $m="7px 0 0 6px">?</Help>}
              {p.i && <Init $l={p.help ? 5 : p.il || 6}><Fit w={p.iw}>{p.i}</Fit></Init>}
              {p.s && <Desc><Fit w={p.sw}>{p.s}</Fit></Desc>}
            </BRow>
          ))}
          <BRow $h={30}>
            <Expand><Triangle /></Expand>
            <BName $t={11} $l={12.5} /><Combo $w={178} /><Init $l={6} />
          </BRow>
        </BList>
        <VBar><Chev d="up" /><VThumb /><Chev d="down" /></VBar>
      </BBody>
      <HBar><Chev d="left" /><HThumb /><Spacer /><Chev d="right" /></HBar>
    </Beauti>
  );
}

/* ---------- top bar and browser ---------- */

const TopBar = styled.header`
  height: 27px;
  flex: none;
  display: grid;
  grid-template-columns: 1fr auto 1fr;
  align-items: center;
  padding: 0 13px 0 12px;
  background: #1d1d1d;
  color: #e6e6e6;
  font: 14.200px ${ui};
`;
const Row = styled.div`
  display: flex;
  align-items: ${(p) => p.$a || "center"};
  gap: ${(p) => p.$g || 0}px;
  justify-content: ${(p) => p.$j || "flex-start"};
`;
const TabStrip = styled.div`
  height: 40px;
  flex: none;
  display: flex;
  align-items: center;
  padding-left: 6px;
  background: #b6e8f2;
  color: #45585d;
  font: 14px ${ui};
`;
const TabMenu = styled.div`
  width: 28px;
  height: 28px;
  margin-right: 3px;
  border-radius: 9px;
  background: #fff;
  display: flex;
  align-items: center;
  justify-content: center;
`;
const Tab = styled.div`
  width: 154.500px;
  height: 34px;
  flex: none;
  align-self: flex-end;
  display: flex;
  align-items: center;
  padding: 0 0 6px 11px;
  color: ${(p) => (p.$on ? "#1f1f1f" : "#45585d")};
  ${(p) => p.$on && css`
    width: 148px;
    margin: 0 3px 0 3.500px;
    padding-left: 7.500px;
    border-radius: 9px 9px 0 0;
    background: #fff;
  `}
`;
const TabText = styled.div`
  width: ${(p) => (p.$on ? 96 : 92)}px;
  margin-left: 8px;
  white-space: pre;
  letter-spacing: -0.2px;
  mask-image: ${(p) => (p.$on ? "none" : "linear-gradient(90deg, #000 54px, transparent 84px)")};
`;
const TabSep = styled.i`
  width: 2px;
  height: 16px;
  margin-left: auto;
  background: #eefafc;
`;
const NavBar = styled.div`
  height: 46px;
  flex: none;
  display: flex;
  align-items: center;
  padding: 0 6.500px 0 12px;
  border-radius: 8px 8px 0 0;
  background: #fff;
  color: #333;
  font: 14.400px ${ui};
`;
const NavBack = styled.div`
  flex: none;
  background: #b6e8f2;
`;
const Omnibox = styled.div`
  width: 1351px;
  height: 34px;
  flex: none;
  margin-left: 16px;
  padding: 0 14px 0 5px;
  border-radius: 17px;
  background: #e1e1e1;
  display: flex;
  align-items: center;
`;
const SiteInfo = styled.div`
  width: 24px;
  height: 24px;
  margin-right: 8px;
  border-radius: 50%;
  background: #fff;
  display: flex;
  align-items: center;
  justify-content: center;
`;
const Dim = styled.span`
  color: #757575;
`;
const Disc = styled.div`
  width: ${(p) => p.$s}px;
  height: ${(p) => p.$s}px;
  flex: none;
  border-radius: 50%;
  background: ${(p) => p.$c};
  color: #fff;
  font: 11.500px/${(p) => p.$s}px ${ui};
  text-align: center;
`;
const Pill = styled.div`
  width: 195.500px;
  height: 34px;
  flex: none;
  margin-left: auto;
  padding: 0 6px 0 15px;
  border-radius: 17px;
  background: #b6e8f2;
  display: flex;
  align-items: center;
  justify-content: space-between;
`;
const Bookmarks = styled.div`
  height: 34px;
  flex: none;
  display: flex;
  align-items: center;
  gap: 19.500px;
  padding: 0 15px 6px 12px;
  background: #fff;
  border-bottom: 1px solid #cfcfcf;
  color: #303030;
  font: 14.400px ${ui};
`;

const Slack = ({ dot }) => (
  <svg width="16" height="16" viewBox="0 0 16 16" strokeWidth="3" strokeLinecap="round">
    <path d="M6 2v4" stroke="#36c5f0" /><path d="M2 6h3" stroke="#36c5f0" />
    <path d="M10 2v4M14 6h-1" stroke="#2eb67d" /><path d="M10 10h4M10 13v1" stroke="#ecb22e" />
    <path d="M6 10v4M2 10h1" stroke="#e01e5a" />{dot && <circle cx="12.500" cy="3" r="2.500" fill="#fff" stroke="#e53935" strokeWidth="1.600" />}
  </svg>
);
const Doc = () => <svg width="16" height="16" viewBox="0 0 16 16"><rect width="16" height="16" rx="2" fill="#4285f4" /><path d="M3.500 5h9M3.500 8h9M3.500 11h6" stroke="#fff" strokeWidth="1.500" /></svg>;
const DriveIcon = () => <svg width="16" height="16" viewBox="0 0 16 16"><path d="M5.500 1h5L5 11l-2.500 4L0 11z" fill="#1fa463" /><path d="M10.500 1L16 11h-5L5.500 1z" fill="#fbbc04" /><path d="M5 11h11l-2.500 4h-11z" fill="#4285f4" /></svg>;
const Leaf = () => <svg width="16" height="16" viewBox="0 0 16 16"><path d="M11 1C6 3 4 7 5 11c1 5 6 4 6 0 0-3-3-4-5-2" stroke="#46a247" strokeWidth="2.200" fill="none" /></svg>;
const StackLogo = ({ s = 16 }) => (
  <svg width={s} height={s} viewBox="0 0 16 16"><rect width="16" height="16" rx="3.500" fill="#e6b80c" /><path d="M13 0l3 3v10l-3 3z" fill="#5b9bef" /><path d="M2 13h13l-2 3H3z" fill="#ee7d0e" /><rect x="1.500" y="1.500" width="13" height="13" rx="2" fill="#eee" /><path d="M4.500 3v5M6.800 3v5M3.300 4.500H8M3.300 6.500H8" stroke="#666" strokeWidth=".8" /></svg>
);
const OIcon = () => <svg width="16" height="16"><rect width="16" height="16" fill="#0b2249" /><ellipse cx="8" cy="8" rx="3.600" ry="4.500" stroke="#fff" strokeWidth="2" fill="none" /></svg>;
const Globe = ({ c = "#4a5d63" }) => <svg width="16" height="16" viewBox="0 0 16 16"><circle cx="8" cy="8" r="8" fill={c} /><path d="M6 3l3 1-1 3H5L3 6zM9 8l4 1-3 4-2-2zM11 3l3 3h-2z" fill="#fff" opacity=".85" /></svg>;

const tabs = [
  ["* Caroline Pl", <Slack dot />], ["Editorial Ma", <Globe />], ["2024 / 08 - G", <DriveIcon />],
  ["words - Goo", <Doc />], ["Cover letter", <Doc />], ["September 2", <Doc />],
  ["jordandoug", <FaGithub size={16} color="#24292e" />], ["SpikesPaper", <Leaf />], ["BurstClock", <Leaf />],
  ["StackEdit", <StackLogo />, true], ["Quantifying", <OIcon />],
];
const sq = (bg, mark) => <svg width="16" height="16" viewBox="0 0 16 16"><rect width="16" height="16" fill={bg} />{mark}</svg>;
const marks = [
  ["YouTube", 60, <FaYoutube size={16} color="#f00" />],
  ["Google Scholar", 101.500, <svg width="16" height="16" viewBox="0 0 16 16"><path d="M8 1l7 6-7 4-7-4z" fill="#4285f4" /><circle cx="8" cy="11" r="4" fill="#a0c3ff" /><path d="M8 1l7 6-4 2a4 4 0 0 0-6 0L1 7z" fill="#356ac3" /></svg>],
  ["Thesaurus", 70, sq("#f4511e", <path d="M4 4h9M8.500 4v9" stroke="#fff" strokeWidth="2.500" />)],
  ["Online JSON V…", 115, <svg width="16" height="16" viewBox="0 0 16 16"><ellipse cx="8" cy="8" rx="6" ry="6.500" stroke="#a33" strokeWidth="3" fill="none" /><path d="M2 8a6 6.500 0 0 1 6-6.500" stroke="#777" strokeWidth="3" fill="none" /></svg>],
  ["Detexify", 58, sq("#7a0d0d", <path d="M4 3l6-1 2 7-6 3z" fill="#f3e4d0" />)],
  ["Slack", 35, <Slack dot />],
  ["Genetic Codes", 96, <svg width="16" height="16"><circle cx="8" cy="8" r="8" fill="#2b7de1" /><path d="M4 12c0-5 8-3 8-8M5 9l6-1M6 7h4" stroke="#fff" fill="none" strokeWidth="1.300" /></svg>],
  ["Slack 2", 46, <Slack dot />],
  ["UglyTrees", 66, <svg width="16" height="16"><path d="M5 1h5M8 1v6M8 5l-6 10M8 5l6 10M6 8v7M10 8v7" stroke="#5e8a94" strokeWidth="1.700" fill="none" /></svg>],
  ["M-Coffee", 62.500, <svg width="16" height="16"><path d="M2 1c1 7 4 6 7 7s6 3 3 7M3 4l5 4" stroke="#dd9a1c" strokeWidth="1.800" fill="none" /></svg>],
  ["Tahua Rangahau", 112.500, <svg width="16" height="16"><path d="M2 3h12v6c0 4-3 6-6 7-3-1-6-3-6-7z" fill="#1d4f91" /><path d="M2 1h12v3H2z" fill="#8aa3bf" /><path d="M5 8h6M6 11h4" stroke="#dfe8f2" strokeWidth="1.500" /></svg>],
  ["Punctuated eq…", 114.500, <Globe c="#202124" />],
  ["smbe_symposi…", 114.500, <Slack />],
];

function Browser() {
  return (
    <>
      <TopBar>
        <Row>
          <Fit w={62}>Activities</Fit>
          <Item $l={35}><svg width="16" height="16"><rect width="16" height="16" fill="#8b8b8b" /><path d="M2 3l4 3-1 6 5-4 3 5-1-10z" fill="#d8d8d8" /></svg></Item>
          <Item $l={6.5}><Fit w={174}>beastfx.app.beauti.Beauti</Fit></Item>
          <Item $l={5.5}><Down c="#e6e6e6" w={10} /></Item>
        </Row>
        <Fit w={78}>{"Sep 4  15:41"}</Fit>
        <Row $j="flex-end">
          <Disc $s={15} $c="#dc1f33">!</Disc>
          <Item $l={24}><ChromeLogo s={16} /></Item>
          <Item $l={37}><svg width="16" height="16"><path d="M6 1h5v4H6zM1 11h5v4H1zM10 11h5v4h-5z" fill="#eee" /><path d="M8.500 5v3M3.500 11V8h9v3" stroke="#eee" strokeWidth="1.300" fill="none" /></svg></Item>
          <Item $l={13}><MdVolumeUp size={17} /></Item>
          <Item $l={11}><MdPowerSettingsNew size={17} /></Item>
          <Item $l={11}><Down c="#e6e6e6" w={10} /></Item>
        </Row>
      </TopBar>
      <TabStrip>
        <TabMenu><MdExpandMore size={16} color="#1f1f1f" /></TabMenu>
        {tabs.map(([t, icon, on], i) => (
          <Tab key={i} $on={on}>
            {icon}
            <TabText $on={on}>{t}</TabText>
            <Item $l={on ? 0 : 5}><Cross s={9} c={on ? "#333" : "#4a5a5e"} w={1.5} /></Item>
            {!on && i !== 8 && <TabSep />}
          </Tab>
        ))}
        <Item $l={11}><svg width="11" height="11"><path d="M5.500 0v11M0 5.500h11" stroke="#5c6b70" strokeWidth="1.500" /></svg></Item>
        <Item $l={74}><svg width="10" height="10"><path d="M0 8h10" stroke="#8ba5ab" strokeWidth="2" /></svg></Item>
        <Item $l={22}><svg width="11" height="11"><path d="M1 3h6v7H1zM3 3V1h7v7H7" stroke="#8ba5ab" strokeWidth="1.500" fill="none" /></svg></Item>
        <Item $l={22}><Cross s={11} c="#8ba5ab" w={1.5} /></Item>
      </TabStrip>
      <NavBack>
        <NavBar>
          <MdArrowBack size={19} color="#222" />
          <Item $l={17}><MdArrowForward size={19} color="#aaa" /></Item>
          <Item $l={17}><MdRefresh size={19} color="#222" /></Item>
          <Item $l={17}><MdOutlineHome size={20} color="#222" /></Item>
          <Omnibox>
            <SiteInfo><svg width="14" height="12"><path d="M8 3h6M0 9h6" stroke="#333" strokeWidth="1.600" /><circle cx="3.500" cy="3" r="2" fill="none" stroke="#333" strokeWidth="1.500" /><circle cx="10.500" cy="9" r="2" fill="none" stroke="#333" strokeWidth="1.500" /></svg></SiteInfo>
            <Fit w={111}>stackedit.io<Dim>/app#</Dim></Fit>
            <Spacer />
            <MdOutlineInstallDesktop size={18} color="#5a5a5a" />
            <Item $l={14}><MdStarBorder size={19} color="#5a5a5a" /></Item>
          </Omnibox>
          <Item $l={19}><Disc $s={17} $c="#19c112"><svg width="17" height="17"><path d="M6 12V8l2-4 1 3 2 1v4z" fill="#fff" /></svg></Disc></Item>
          <Item $l={20}><svg width="16" height="16"><path d="M9 4.500C8 1 2 1 2 8s6 7 7 3.500" stroke="#a9a9a9" strokeWidth="2.500" fill="none" /><path d="M13 2v12" stroke="#a9a9a9" strokeWidth="2.500" strokeDasharray="2.500 2" /></svg></Item>
          <Item $l={18}><MdOutlineExtension size={19} color="#222" /></Item>
          <Item $l={17}><svg width="2" height="16"><path d="M1 0v16" stroke="#b6e8f2" strokeWidth="2" /></svg></Item>
          <Item $l={16}><MdOutlineFileDownload size={21} color="#222" /></Item>
          <Item $l={15}><Disc $s={20} $c="#a843b8">J</Disc></Item>
          <Pill><Fit w={152.500}>New Chrome available</Fit><MdMoreVert size={19} /></Pill>
        </NavBar>
      </NavBack>
      <Bookmarks>
        {marks.map(([t, w, icon], i) => <Row key={i} $g={6.5}>{icon}<Fit w={w}>{t}</Fit></Row>)}
        <Spacer />
        <svg width="1" height="16"><path d="M.5 0v16" stroke="#b6e8f2" /></svg>
        <Row $g={6.5}><MdFolderOpen size={18} color="#555" /><Fit w={98.500}>All Bookmarks</Fit></Row>
      </Bookmarks>
    </>
  );
}

/* ---------- StackEdit ---------- */

const EdNav = styled.div`
  height: 45px;
  flex: none;
  display: flex;
  align-items: center;
  padding: 0 8px 0 8px;
  background: #2c2c2c;
  color: #b5b5b5;
  font: 19.500px ${prose};
`;
const EdButton = styled.div`
  width: 34px;
  display: flex;
  justify-content: center;
  margin-left: ${(p) => p.$l || 0}px;
  opacity: ${(p) => (p.$off ? 0.35 : 1)};
`;
const EdBody = styled.div`
  height: 988px;
  flex: none;
  display: flex;
  overflow: hidden;
  font: 18px/30px ${prose};
  color: #333;
`;
const Source = styled.div`
  position: relative;
  width: 947px;
  flex: none;
  overflow: hidden;
  padding-left: 25px;
  background: #fff;
`;
const H2 = styled.div`
  height: ${(p) => p.$h}px;
  font-size: 27px;
  line-height: 43px;
  letter-spacing: 0.08px;
  font-weight: 700;
  white-space: pre;
  span { color: #b5b5b5; font-weight: 400; }
`;
const Line = styled.div`
  height: 30px;
  white-space: pre;
  margin-top: ${(p) => p.$t || 0}px;
  padding-left: ${(p) => p.$l || 0}px;
  padding-right: ${(p) => p.$r || 0}px;
  text-align: ${(p) => (p.$r !== undefined ? "right" : "left")};
`;
const Faint = styled.span`
  color: #b5b5b5;
`;
const CodeBox = styled.code`
  display: inline-block;
  height: 25px;
  line-height: 25px;
  padding: 0 4px;
  border-radius: 3px;
  background: ${(p) => (p.$dark ? "#e7e7e7" : "#f2f2f2")};
  font-family: ${mono};
  font-size: 15.250px;
`;
const Tick = styled.span`
  display: inline-block;
  width: 5px;
  font-size: 9px;
  line-height: 10px;
  vertical-align: 6px;
  color: #aaa;
`;
const Mark = styled.mark`
  background: #ff0;
  color: inherit;
  padding: 1px 0 2px;
`;
const Code = ({ children }) => <CodeBox><Tick>`</Tick>{children}<Tick>`</Tick></CodeBox>;
const PCode = ({ children }) => <CodeBox $dark>{children}</CodeBox>;
const ImageRef = styled.div`
  width: 339px;
  height: 35px;
  line-height: 33px;
  margin: 33px 0 28px;
  border-radius: 3px;
  background: #f2f2f2;
  color: #b5b5b5;
  white-space: pre;
`;
const Ref = styled.u`
  color: #000;
`;
const HiddenHead = styled.span`
  display: inline-block;
  width: 276px;
  overflow: hidden;
  vertical-align: top;
`;
const SideBar = styled.div`
  width: 26px;
  flex: none;
  display: flex;
  flex-direction: column;
  align-items: center;
  padding: 8px 0 8px;
  background: #f3f3f3;
`;
const Preview = styled.div`
  width: 947px;
  flex: none;
  display: flex;
  overflow: hidden;
  background: #f3f3f3;
  color: #3f3f3f;
`;
const PreviewText = styled.div`
  width: 888px;
  flex: none;
  margin-left: 25.500px;
`;
const Rule = styled.div`
  height: 1px;
  margin: 8px 0 37px;
  background: #c9c9c9;
`;
const Bullet = styled.span`
  display: inline-block;
  width: ${(p) => p.$w || 17}px;
  text-align: left;
`;
const Anchor = styled.u`
  color: #0c93e4;
`;
const ScrollThumb = styled.div`
  width: 8px;
  height: 168px;
  margin: 187px 0 0 25.500px;
  border-radius: 4px;
  background: #b5b5b5;
`;
const FindPanel = styled.div`
  position: absolute;
  left: 0;
  bottom: 0;
  width: 300px;
  height: 100px;
  padding: 10px 12px 0 25px;
  background: #e6e6e6;
  font: 15.500px/20px ${prose};
  color: #444;
`;
const FindInput = styled.div`
  width: 240px;
  height: 32px;
  padding: 5px 6px;
  border-radius: 3px;
  background: #fff;
  font-size: 16.500px;
`;
const FindCount = styled.div`
  width: 240px;
  text-align: right;
  font-size: 13px;
  color: #888;
`;
const StatusBar = styled.footer`
  height: 20px;
  flex: none;
  display: flex;
  align-items: center;
  gap: 8px;
  padding: 0 10px;
  background: #007acc;
  color: #e6f2fa;
  font: 13px/20px ${prose};
`;

const SideIcon = ({ d, mt = 0, c = "#a3a3a3" }) => (
  <svg width="20" height={18 + mt} viewBox={`0 ${-mt} 20 ${18 + mt}`} fill="none" stroke={c} strokeWidth="1.800"><path d={d} /></svg>
);

function StackEdit() {
  return (
    <>
      <EdNav>
        <MdFolder size={32} />
        <EdButton $l={14}><MdUndo size={21} /></EdButton>
        <EdButton $off><MdRedo size={21} /></EdButton>
        <EdButton $l={7}><MdFormatBold size={23} /></EdButton>
        <EdButton><MdFormatItalic size={23} /></EdButton>
        <EdButton><MdFormatSize size={21} /></EdButton>
        <EdButton><MdStrikethroughS size={21} /></EdButton>
        <EdButton $l={8}><MdFormatListBulleted size={21} /></EdButton>
        <EdButton><MdFormatListNumbered size={21} /></EdButton>
        <EdButton><MdChecklist size={21} /></EdButton>
        <EdButton $l={8}><MdFormatQuote size={23} /></EdButton>
        <EdButton><MdCode size={22} /></EdButton>
        <EdButton><svg width="16" height="16"><path d="M1 1h14v14H1zM1 6h14M1 10.500h14M8 1v14" stroke="#b5b5b5" strokeWidth="1.800" fill="none" /></svg></EdButton>
        <EdButton><svg width="22" height="22" viewBox="0 0 24 24"><g transform="rotate(-45 12 12)"><MdLink size={24} /></g></svg></EdButton>
        <EdButton><svg width="16" height="18"><path d="M2 0h8l5 5v11a2 2 0 0 1-2 2H3a2 2 0 0 1-2-2V2z" fill="#b5b5b5" /><path d="M3 15l3-4 2 2 3-4 2 6z" fill="#2c2c2c" /><circle cx="5.500" cy="7" r="1.700" fill="#2c2c2c" /></svg></EdButton>
        <Spacer />
        <Fit w={119.5}>Welcome file</Fit>
        <EdButton $off $l={23}><MdSync size={22} /></EdButton>
        <EdButton $off $l={10}><MdFileUpload size={22} /></EdButton>
        <Item $l={14}><StackLogo s={29} /></Item>
      </EdNav>
      <EdBody>
        <Source>
          <H2 $h={100}><span>## </span>Setting up an analysis</H2>
          <Line><Faint>1. </Faint>Launch BEAUti.</Line>
          <Line $t={60}><Faint>2. </Faint>Import data and set up site model, as per usual.</Line>
          <Line $t={30}><Faint>3. </Faint>Open the <Code>Clock Model</Code> tab and select <Code>Punctuated Relaxed Clock</Code></Line>
          <Line $l={19}><Faint>- </Faint>This will introduce the following parameters</Line>
          <Line $l={38}><Faint>- </Faint>The mean spike size <Code>GSM<Mark>spikeMean</Mark></Code> (under a Gamma distribution)</Line>
          <Line>sizes.</Line>
          <Line $l={38}><Faint>- </Faint>The shape of spike sizes <Code>GSMspikeShape</Code> (Gamma distribution). High</Line>
          <Line>sizes.</Line>
          <Line $l={38}><Faint>- </Faint>One <Code>spike</Code> for every branch in the tree, whose sizes are Gamma</Line>
          <Line $l={38}><Faint>- </Faint>The standard deviation <Code>GSMclockSD</Code> of branch rates under a gradual</Line>
          <Line>distribution). High standard deviation = higher variance of branch rates. Set</Line>
          <Line>model.</Line>
          <Line $l={38}><Faint>- </Faint>One <Code>rate</Code> for every branch in the tree, whose sizes are LogNormal</Line>
          <Line $l={38}><Faint>- </Faint>The <Code>clockRate</Code> in units of 'gradual changes per site per unit of time'</Line>
          <Line>(e.g., tip dates, node calibrations) then leave this term fixed at 1.0.</Line>
          <Line $l={38}><Faint>- </Faint>A boolean model indicator <Code>GSMuseSpikeModel</Code> that determines whether</Line>
          <ImageRef>![Setting up the clock model](figs/Fig1.png)</ImageRef>
          <Line><Faint>4. </Faint>Open the <Code>Priors</Code> tab and select one of the following tree priors:</Line>
          <Line><Faint>- </Faint><Code>Birth Death Model With Stubs</Code> (BDWS) is the standard birth-death model when tip dates are not used.</Line>
          <Line>Parameters:</Line>
          <Line $l={38}><Faint>- </Faint>Birth rate <Code>BDWSBirthRate</Code> .</Line>
          <Line $l={38}><Faint>- </Faint>Reproduction number <Code>BDWSReproductionNumber</Code>, which is assumed to be greater than 1.</Line>
          <Line><Faint>- </Faint><Code>Fossilised Birth Death Model With Stubs</Code> (FBDWS) is the <Faint>[</Faint><Ref>fossilised birth-death</Ref><Faint>]</Faint></Line>
          <Line><Faint><HiddenHead>(https://www.beast2.org/divergenc</HiddenHead>e-dating-with-sampled-ancestors-fbd-model/)</Faint> tree prior with serially sampled</Line>
          <Line>tip dates, sampled ancestors estimated, and the following parameters</Line>
          <FindPanel>
            <Row $g={11} $a="flex-start"><FindInput><Fit w={74}>spikemean</Fit></FindInput><Cross s={14} c="#666" w={1.3} /></Row>
            <FindCount>0 of 5</FindCount>
            <Row>
              <Item $l={5}><Faint><b>Aa</b></Faint></Item><Item $l={14}><Faint><b>.*</b></Faint></Item>
              <Item $l={58}><Fit w={72}>PREVIOUS</Fit></Item><Item $l={16}><Fit w={39}>NEXT</Fit></Item>
            </Row>
          </FindPanel>
        </Source>
        <SideBar>
          <SideIcon d="M1 1h18M3 6h14v10H3z" />
          <SideIcon mt={12} d="M2 1h16v15H2zM10 1v15" />
          <SideIcon mt={10} c="#c4c4c4" d="M1 9c4-8 14-8 18 0-4 8-14 8-18 0zM7 9a3 3 0 1 0 6 0a3 3 0 1 0-6 0" />
          <Spacer />
          <SideIcon c="#b5b5b5" d="M3 9a7 7 0 1 0 14 0a7 7 0 1 0-14 0M10 0v5M10 13v5M1 9h5M14 9h5" />
          <SideIcon mt={11} d="M2 9h16M6 1v5M3.500 3.500L6 1l2.500 2.500M14 1v5M11.500 3.500L14 1l2.500 2.500M6 12v5M3.500 14.500L6 17l2.500-2.500M14 12v5M11.500 14.500L14 17l2.500-2.500" />
          <SideIcon mt={11} d="M3 2h14v10H3zM1 16h18" />
        </SideBar>
        <Preview>
          <PreviewText>
            <H2 $h={43}>Setting up an analysis</H2>
            <Rule />
            <Line $l={20}>1. Launch BEAUti.</Line>
            <Line $t={156} $r={21}>their expected</Line>
            <Line $t={30} $r={16}>higher variance of</Line>
            <Line $t={30} $r={45}>under the prior.</Line>
            <Line $r={83}>under a</Line>
            <Line $r={0}>the same meaning</Line>
            <Line $t={30} $r={15}>under the prior.</Line>
            <Line $r={52}>temporal</Line>
            <Line $t={30} $r={1}>are being used</Line>
            <Line $t={50} $l={17}>Setting up the clock model</Line>
            <Line $t={23} $l={20}>4. Open the <PCode>Priors</PCode> tab and select one of the following tree priors:</Line>
            <Line $t={23} $l={22.500}><Bullet>•</Bullet><PCode>Birth Death Model With Stubs</PCode> (BDWS) is the standard birth-death model when tip dates are not used.</Line>
            <Line $l={39.5}>Parameters:</Line>
            <Line $l={39.5}>- Birth rate <PCode>BDWSBirthRate</PCode> .</Line>
            <Line $l={39.5}>- Reproduction number <PCode>BDWSReproductionNumber</PCode>, which is assumed to be greater than 1.</Line>
            <Line $l={22.5}><Bullet>•</Bullet><PCode>Fossilised Birth Death Model With Stubs</PCode> (FBDWS) is the <Anchor>fossilised birth-death</Anchor> tree prior with serially</Line>
            <Line $l={39.5}>sampled tip dates, sampled ancestors estimated, and the following parameters</Line>
            <Line $l={62.5}><Bullet>◦</Bullet>Birth rate <PCode>FBDWSBirthRate</PCode></Line>
          </PreviewText>
          <ScrollThumb />
        </Preview>
      </EdBody>
      <StatusBar>
        <Fit w={56}>Markdown</Fit>
        <Fit w={60}><b>9384</b> bytes</Fit>
        <Fit w={63}><b>1411</b> words</Fit>
        <Fit w={48}><b>146</b> lines</Fit>
        <Fit w={77}><b>Ln 50, Col 112</b></Fit>
        <Spacer />
        <Fit w={33.5}>HTML</Fit>
        <Fit w={86}><b>7247</b> characters</Fit>
        <Fit w={63}><b>1344</b> words</Fit>
        <Fit w={75}><b>77</b> paragraphs</Fit>
      </StatusBar>
    </>
  );
}

/* ---------- file manager ---------- */

const Files = styled.section`
  position: absolute;
  left: 590px;
  top: 292px;
  width: 1199px;
  height: 610px;
  z-index: 5;
  display: flex;
  flex-direction: column;
  border-radius: 8px 8px 0 0;
  background: #fcfcfc;
  box-shadow: 0 3px 16px rgba(0, 0, 0, 0.4), 0 0 0 1px rgba(0, 0, 0, 0.35);
  font: 14.200px ${ui};
  color: #9c9c9c;
`;
const FHead = styled.div`
  height: 47px;
  flex: none;
  display: flex;
  align-items: center;
  padding: 0 14px 2px 7px;
  border-radius: 8px 8px 0 0;
  background: #3e3c39;
  color: #aba9a5;
`;
const Group = styled.div`
  flex: none;
  display: flex;
  height: 34px;
  margin-left: ${(p) => p.$l || 0}px;
  border: 1px solid #292826;
  border-radius: 5px;
  background: #3a3835;
`;
const Seg = styled.div`
  width: ${(p) => p.$w}px;
  display: flex;
  align-items: center;
  justify-content: center;
  gap: 14px;
  padding-right: ${(p) => p.$pr || 0}px;
  & + & { border-left: 1px solid #292826; }
`;
const FBody = styled.div`
  flex: 1;
  display: flex;
  min-height: 0;
`;
const Places = styled.div`
  width: 161px;
  flex: none;
  padding-top: 2px;
  background: #fafafa;
  border-right: 1px solid #e3e3e3;
`;
const Place = styled.div`
  height: 38px;
  display: flex;
  align-items: center;
  gap: 8px;
  padding-left: 14px;
`;
const PlaceRule = styled.div`
  height: 1px;
  margin: 4px 0;
  background: #dcdcdc;
`;
const Eject = styled.div`
  width: 29px;
  height: 28px;
  margin-left: auto;
  margin-right: 13px;
  border: 1px solid #dedede;
  border-radius: 50%;
  display: flex;
  align-items: center;
  justify-content: center;
`;
const Listing = styled.div`
  flex: 1;
  display: flex;
  flex-direction: column;
`;
const Cols = styled.div`
  height: ${(p) => p.$h}px;
  flex: none;
  display: grid;
  grid-template-columns: 805px 77px 96px 60px;
  align-items: stretch;
  background: ${(p) => (p.$row ? "#eb6536" : "#f1f2f1")};
  border-bottom: 1px solid ${(p) => (p.$row ? "#d98a6c" : "#dcdcdc")};
  font-weight: ${(p) => (p.$row ? 400 : 700)};
  font-size: ${(p) => (p.$row ? 14.2 : 13.4)}px;
`;
const Col = styled.div`
  display: flex;
  align-items: center;
  justify-content: ${(p) => p.$j || "flex-start"};
  padding: 0 7px;
  color: ${(p) => p.$c || "inherit"};
  border-right: 1px solid ${(p) => (p.$line ? "#dfdfdf" : "transparent")};
`;
const Selected = styled.div`
  width: 219px;
  height: 24px;
  margin: auto 0 0 auto;
  padding: 1px 0 0 13px;
  border: 1px solid #d9d9d9;
  border-width: 1px 0 0 1px;
  border-radius: 4px 0 0 0;
  background: #f7f7f7;
`;

const P = ({ d, f }) => (
  <svg width="16" height="16" viewBox="0 0 16 16" fill="none" stroke="#b3b3b3" strokeWidth="1.200"><path d={d} />{f && <path d={f} fill="#b3b3b3" stroke="none" />}</svg>
);
const house = "M.5 8.500L8 1l7.500 7.500M2.500 8v7.500h11V8M6.500 15.500V10H10v5.500";
const disk = ["M.5 3a2 2 0 0 1 2-2h11a2 2 0 0 1 2 2v10a2 2 0 0 1-2 2h-11a2 2 0 0 1-2-2zM.5 10.500h15", "M3 12h10v1.500H3z"];
const folder = ["M.5 13.500v-11h5l1.500 2h8.500v9a1 1 0 0 1-1 1h-13zM.5 6h4L7 4.500"];
const places = [
  ["Home", 40, [house]], ["Desktop", 56.5, ["M1.500 2.500h13v11h-13z", "M1 2h3v12H1z"]],
  ["Documents", 75, ["M1.500.500h13v9l-5 6h-8zM4 4h8M4 6.500h8M4 9h5"]],
  ["Downloads", 73.5, ["M6.500 1v6H4L8 12l4-5H9.500V1zM4 15h8"]],
  ["Music", 39, ["M5 13V2l9-1v10", "M1 11h4v4H2zM10 10h4v3l-3 1zM5 1l9-1v3L5 4z"]],
  ["Pictures", 54, ["M1.500 1.500h13v13h-13z", "M3 11l3-5 2 3 2-2 3 4zM10 3h2v2h-2zM1 13h14v2H1z"]],
  ["Videos", 46, ["M1.500 1.500h13v13h-13zM4.500 1v14M11.500 1v14M4.500 8h7M1 4h3M1 8h3M1 12h3M12 4h3M12 8h3M12 12h3"]],
  ["Trash", 37, ["M3 5v10h6M5 7v6M7.500 7v5M10 7v3M13 5v4M10 13a2 2 0 1 0 4 0a2 2 0 1 0-4 0", "M1 3h13v2H1zM5 1h5v2H5z"]],
  null,
  ["78 MB Volume", 95, disk], ["data", 30, disk],
  null,
  ["beast2.7", 58, folder], ["linguistics", 66, folder], ["Sloan2022", 68.5, folder],
  null,
  ["Other Locations", 106, ["M8 2v12M2 8h12"]],
];

function FileManager() {
  return (
    <Files>
      <FHead>
        <Group><Seg $w={34}><Chev d="left" c="#8b8985" s={15} w={0.8} /></Seg><Seg $w={34}><Chev d="right" c="#65635f" s={15} w={0.8} /></Seg></Group>
        <Group $l={6}>
          <Seg $w={94} $pr={6}>
            <svg width="16" height="16" fill="none" stroke="#aba9a5" strokeWidth="1.200"><path d={house} /></svg>
            <Fit w={40}>Home</Fit>
          </Seg>
          <Seg $w={109.5}><Fit w={75.5}>Documents</Fit></Seg>
          <Seg $w={123.5}><Fit w={90.5}>Marsden2019</Fit></Seg>
          <Seg $w={91}><Fit w={57.5}>beast2.7</Fit></Seg>
          <Seg $w={164}><Fit w={131}>GammaSpikeModel</Fit></Seg>
          <Seg $w={79}><Fit w={24}>figs</Fit><Item $l={3}><Down c="#aba9a5" w={10} /></Item></Seg>
        </Group>
        <Spacer />
        <Group><Seg $w={33}><svg width="16" height="16" fill="none" stroke="#aba9a5" strokeWidth="1.200"><circle cx="7" cy="7" r="6" /><path d="M11 11.500l4 4" /></svg></Seg></Group>
        <Group $l={8}>
          <Seg $w={34}><svg width="14" height="14" fill="none" stroke="#aba9a5" strokeWidth="1.200"><path d="M1 1h4v4H1zM8.500 1h4v4h-4zM1 8.500h4v4H1zM8.500 8.500h4v4h-4z" /></svg></Seg>
          <Seg $w={34}><Down c="#aba9a5" w={10} /></Seg>
        </Group>
        <Group $l={7}><Seg $w={33}><svg width="12" height="12"><path d="M1 1.500h10M1 6h10M1 10.500h10" stroke="#aba9a5" strokeWidth="1.200" /></svg></Seg></Group>
        <Item $l={26}><svg width="9" height="12"><path d="M0 9.500h9" stroke="#aba9a5" /></svg></Item>
        <Item $l={31}><svg width="9" height="9"><rect x=".5" y=".5" width="8" height="8" stroke="#aba9a5" fill="none" /></svg></Item>
        <Item $l={25}><CloseDot $s={20} $c="#5f5e5b"><Cross s={9} w={1.4} /></CloseDot></Item>
      </FHead>
      <FBody>
        <Places>
          {places.map((p, i) => p ? (
            <Place key={i}>
              <P d={p[2][0]} f={p[2][1]} /><Fit w={p[1]}>{p[0]}</Fit>
              {p[0] === "data" && <Eject><svg width="9" height="10"><path d="M0 6l4.500-6L9 6zM0 8h9v2H0z" fill="#a9a9a9" /></svg></Eject>}
            </Place>
          ) : <PlaceRule key={i} />)}
        </Places>
        <Listing>
          <Cols $h={25}>
            <Col $line><Fit w={40}>Name</Fit><Spacer /><Down c="#c4c4c4" w={9} /></Col>
            <Col $line><Fit w={29}>Size</Fit></Col>
            <Col $line $j="flex-end"><Fit w={62}>Modified</Fit></Col>
            <Col><Fit w={28.5}>Star</Fit></Col>
          </Cols>
          <Cols $h={46} $row>
            <Col $c="#fdf0ea">
              <Item $l={9}><svg width="29" height="26"><rect x=".5" y=".5" width="28" height="25" rx="3" fill="#b64fc8" stroke="#8b2f86" /><path d="M1 14h27v8a3 3 0 0 1-3 3H4a3 3 0 0 1-3-3z" fill="#cf6fd6" /><path d="M7 21l5-10 4 6 2-3 3 7z" fill="#f3d4f3" /><circle cx="19" cy="9" r="2.500" fill="#f3d4f3" /></svg></Item>
              <Item $l={7}><Fit w={57}>Fig1.png</Fit></Item>
            </Col>
            <Col $c="#c4633c"><Fit w={48}>42.1 kB</Fit></Col>
            <Col $c="#c4633c" $j="flex-end"><Fit w={34.5}>15:39</Fit></Col>
            <Col $c="#fff"><Item $l={14}><svg width="16" height="16" viewBox="0 0 16 16"><path d="M8 1.500l2 4.700 5 .3-3.900 3.200 1.300 4.900L8 11.900l-4.400 2.700 1.300-4.900L1 6.500l5-.3z" fill="none" stroke="#fff" strokeWidth="1.200" /></svg></Item></Col>
          </Cols>
          <Selected><Fit w={191.5}>{"“Fig1.png” selected  (42.1 kB)"}</Fit></Selected>
        </Listing>
      </FBody>
    </Files>
  );
}

export default function App() {
  return (
    <Desktop>
      <Global />
      <LeftScreen>
        <DockBar />
        <Pinta />
        <BeautiWindow />
      </LeftScreen>
      <RightScreen>
        <Browser />
        <StackEdit />
        <FileManager />
      </RightScreen>
    </Desktop>
  );
}
